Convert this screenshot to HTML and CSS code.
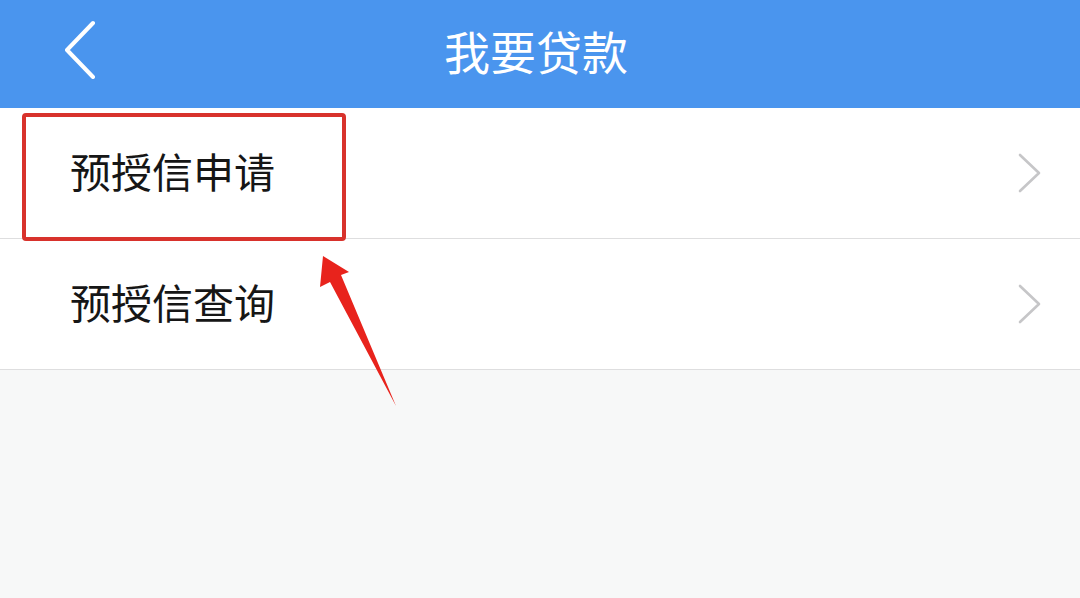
FILE: index.html
```html
<!DOCTYPE html>
<html lang="zh-CN">
<head>
<meta charset="utf-8">
<title>我要贷款</title>
<link rel="stylesheet" href="styles.css">
</head>
<body>
<div class="page">
  <header class="navbar">
    <span class="back">
      <svg width="40" height="60" viewBox="0 0 40 60"><polyline points="31,4 5,31 31,58" fill="none" stroke="#ffffff" stroke-width="4" stroke-linecap="round" stroke-linejoin="round"/></svg>
    </span>
    <h1 class="title">我要贷款</h1>
  </header>
  <ul class="list">
    <li class="item">
      <span class="label">预授信申请</span>
      <svg class="chev" width="26" height="40" viewBox="0 0 26 40"><polyline points="3,2 22,20 3,38" fill="none" stroke="#c6c6c8" stroke-width="2.6" stroke-linecap="round" stroke-linejoin="round"/></svg>
    </li>
    <li class="item">
      <span class="label">预授信查询</span>
      <svg class="chev" width="26" height="40" viewBox="0 0 26 40"><polyline points="3,2 22,20 3,38" fill="none" stroke="#c6c6c8" stroke-width="2.6" stroke-linecap="round" stroke-linejoin="round"/></svg>
    </li>
  </ul>
  <div class="highlight"></div>
  <svg class="arrow" width="1080" height="598" viewBox="0 0 1080 598">
    <polygon points="323,256 349,272 341,275 396,406 330,282 320,287" fill="#e8231c"/>
  </svg>
</div>
</body>
</html>
```

FILE: styles.css
```css
html, body {
  margin: 0;
  padding: 0;
  background: #f7f8f8;
}
body {
  font-family: "Noto Sans CJK SC", "Noto Sans", sans-serif;
}
.page {
  position: relative;
  width: 1080px;
  height: 598px;
  overflow: hidden;
}
.navbar {
  height: 108px;
  background: #4a95ee;
  display: flex;
  align-items: center;
  justify-content: center;
  position: relative;
}
.back {
  position: absolute;
  left: 62px;
  top: 19px;
  display: flex;
}
.title {
  margin: -8px 8px 0 0;
  color: #ffffff;
  font-size: 46px;
  font-weight: 400;
  line-height: 1;
}
.list {
  list-style: none;
  margin: 0;
  padding: 0;
  background: #ffffff;
}
.item {
  height: 130px;
  display: flex;
  align-items: center;
  justify-content: space-between;
  padding: 0 37px 0 70px;
  border-bottom: 1px solid #dededf;
}
.label {
  font-size: 41px;
  color: #161616;
  line-height: 1;
  margin-top: -6px;
}
.chev {
  display: block;
}
.highlight {
  position: absolute;
  left: 22px;
  top: 113px;
  width: 316px;
  height: 120px;
  border: 4px solid #d8322c;
  border-radius: 4px;
}
.arrow {
  position: absolute;
  left: 0;
  top: 0;
  pointer-events: none;
}
```
